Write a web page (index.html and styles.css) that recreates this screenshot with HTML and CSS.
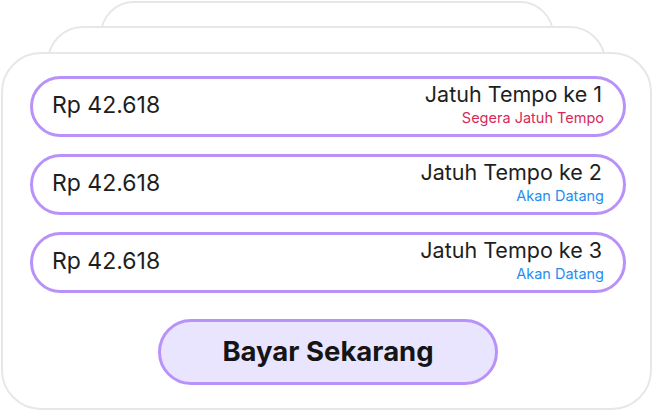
FILE: index.html
```html
<!DOCTYPE html>
<html>
<head>
<meta charset="utf-8">
<link rel="stylesheet" href="styles.css">
</head>
<body>
<div class="stack">
  <div class="card card-back"></div>
  <div class="card card-mid"></div>
  <div class="card card-front">
    <div class="rows">
      <div class="row">
        <div class="amount">Rp 42.618</div>
        <div class="due">
          <div class="due-title">Jatuh Tempo ke 1</div>
          <div class="due-status urgent">Segera Jatuh Tempo</div>
        </div>
      </div>
      <div class="row">
        <div class="amount">Rp 42.618</div>
        <div class="due">
          <div class="due-title">Jatuh Tempo ke 2</div>
          <div class="due-status upcoming">Akan Datang</div>
        </div>
      </div>
      <div class="row">
        <div class="amount">Rp 42.618</div>
        <div class="due">
          <div class="due-title">Jatuh Tempo ke 3</div>
          <div class="due-status upcoming">Akan Datang</div>
        </div>
      </div>
    </div>
    <button class="pay">Bayar Sekarang</button>
  </div>
</div>
</body>
</html>
```

FILE: styles.css
```css
html, body {
  margin: 0;
  padding: 0;
  background: #ffffff;
}
body {
  font-family: Inter, "Liberation Sans", sans-serif;
  color: #1b1b1b;
}
.stack {
  display: grid;
  width: 654px;
  height: 411px;
  overflow: hidden;
}
.card {
  grid-area: 1 / 1;
  box-sizing: border-box;
  background: #ffffff;
  border: 2px solid #e7e7e7;
  border-radius: 40px;
}
.card-back {
  margin: 1px 100px 0 100px;
  height: 120px;
  border-radius: 34px;
}
.card-mid {
  margin: 26px 48px 0 47px;
  height: 120px;
  border-radius: 36px;
}
.card-front {
  margin: 52px 2px 0 1px;
  height: 358px;
  padding: 22px 24px 0 27px;
  display: flex;
  flex-direction: column;
  align-items: center;
}
.rows {
  display: flex;
  flex-direction: column;
  gap: 17px;
  width: 100%;
}
.row {
  box-sizing: border-box;
  height: 61px;
  border: 3px solid #b892f8;
  border-radius: 31px;
  display: flex;
  align-items: center;
  justify-content: space-between;
  padding: 0 21px 0 19px;
}
.amount {
  font-size: 23px;
  line-height: 28px;
  color: #1e1e1e;
  margin-top: -3px;
}
.due {
  text-align: right;
  display: flex;
  flex-direction: column;
  align-items: flex-end;
  gap: 3px;
  margin-top: -5px;
}
.due-title {
  font-size: 21.5px;
  line-height: 24px;
  color: #1e1e1e;
}
.due-status {
  font-size: 14.5px;
  line-height: 17px;
  margin-right: -2px;
}
.urgent { color: #d72a5a; }
.upcoming { color: #1f8ef0; }
.pay {
  margin-top: 26px;
  width: 340px;
  height: 66px;
  box-sizing: border-box;
  background: #e9e5ff;
  border: 3px solid #b892f8;
  border-radius: 33px;
  font-family: Inter, "Liberation Sans", sans-serif;
  font-size: 27.5px;
  font-weight: 700;
  color: #151515;
  padding: 0 0 3px 0;
}
```
